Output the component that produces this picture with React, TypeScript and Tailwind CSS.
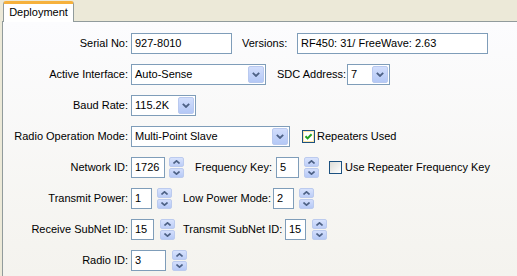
import type { ReactNode } from "react";

const font = { fontFamily: '"Liberation Sans", Arial, sans-serif' };

function Label({ children, className = "" }: { children: ReactNode; className?: string }) {
  return <span className={`whitespace-nowrap text-[11px] text-black ${className}`}>{children}</span>;
}

function TextBox({ value, width }: { value: string; width: string }) {
  return (
    <div
      className={`flex h-[21px] items-center border border-[#7f9db9] bg-white pl-[3px] text-[11px] text-black ${width}`}
    >
      {value}
    </div>
  );
}

function Chevron({ up = false }: { up?: boolean }) {
  return (
    <svg width="7" height="4" viewBox="0 0 7 4" className={up ? "rotate-180" : ""}>
      <path d="M0.5 0.5 L3.5 3.2 L6.5 0.5" fill="none" stroke="#4d6185" strokeWidth="1.6" />
    </svg>
  );
}

function Select({ value, width }: { value: string; width: string }) {
  return (
    <div className={`flex h-[21px] items-center border border-[#7f9db9] bg-white text-[11px] text-black ${width}`}>
      <span className="flex-1 pl-[3px]">{value}</span>
      <div className="m-px flex h-[17px] w-[16px] items-center justify-center rounded-[2px] border border-[#b9c9ef] bg-gradient-to-b from-[#d2defc] to-[#b4c8f6]">
        <svg width="8" height="5" viewBox="0 0 8 5">
          <path d="M0.8 0.8 L4 4 L7.2 0.8" fill="none" stroke="#4d6185" strokeWidth="1.8" />
        </svg>
      </div>
    </div>
  );
}

function Spinner({ className = "" }: { className?: string }) {
  return (
    <div className={`flex h-[21px] w-[15px] flex-col gap-px ${className}`}>
      <div className="flex flex-1 items-center justify-center rounded-[2px] border border-[#bccbee] bg-gradient-to-b from-[#d8e3fd] to-[#bccdf7]">
        <Chevron up />
      </div>
      <div className="flex flex-1 items-center justify-center rounded-[2px] border border-[#bccbee] bg-gradient-to-b from-[#d3defc] to-[#b6c9f6]">
        <Chevron />
      </div>
    </div>
  );
}

function CheckBox({ checked, className = "" }: { checked?: boolean; className?: string }) {
  return (
    <div
      className={`flex h-[13px] w-[13px] items-center justify-center border border-[#1c5180] ${
        checked
          ? "bg-gradient-to-br from-[#fff6dc] to-[#f6c65a] shadow-[inset_0_0_0_1px_#fbe3a4]"
          : "bg-gradient-to-br from-[#dcdcd7] to-white"
      } ${className}`}
    >
      {checked && (
        <div className="flex h-[9px] w-[9px] items-center justify-center bg-white">
          <svg width="9" height="9" viewBox="0 0 9 9">
            <path d="M1.5 4.2 L3.6 6.4 L7.6 2.2" fill="none" stroke="#21a121" strokeWidth="2" />
          </svg>
        </div>
      )}
    </div>
  );
}

function Row({ label, children }: { label: string; children: ReactNode }) {
  return (
    <div className="flex h-[21px] items-center">
      <Label className="w-[125px] text-right">{label}</Label>
      <div className="ml-[3px] flex items-center">{children}</div>
    </div>
  );
}

export default function App() {
  return (
    <div className="flex h-[276px] w-[517px] flex-col overflow-hidden bg-[#ece9d8]" style={font}>
      <div className="flex pl-[3px] pt-px">
        <div className="relative z-10 -mb-px flex h-[21px] w-[71px] items-center justify-center rounded-t-[3px] border-x border-t-[3px] border-x-[#919b9c] border-t-[#f6b13c] bg-white pb-[2px] text-[11px] text-black">
          Deployment
        </div>
      </div>
      <div className="ml-[2px] flex flex-1 flex-col gap-[10px] border-l border-t border-[#919b9c] bg-gradient-to-b from-[#fcfcfe] to-[#f4f3ee] pt-[11px]">
        <Row label="Serial No:">
          <TextBox value="927-8010" width="w-[101px]" />
          <Label className="ml-[10px] w-[55px]">Versions:</Label>
          <TextBox value="RF450: 31/ FreeWave: 2.63" width="w-[191px]" />
        </Row>
        <Row label="Active Interface:">
          <Select value="Auto-Sense" width="w-[135px]" />
          <Label className="ml-[11px] w-[70px]">SDC Address:</Label>
          <Select value="7" width="w-[43px]" />
        </Row>
        <Row label="Baud Rate:">
          <Select value="115.2K" width="w-[65px]" />
        </Row>
        <Row label="Radio Operation Mode:">
          <Select value="Multi-Point Slave" width="w-[159px]" />
          <CheckBox checked className="ml-[12px]" />
          <Label className="ml-[2px]">Repeaters Used</Label>
        </Row>
        <Row label="Network ID:">
          <TextBox value="1726" width="w-[34px]" />
          <Spinner className="ml-[4px]" />
          <Label className="ml-[11px] w-[81px]">Frequency Key:</Label>
          <TextBox value="5" width="w-[23px]" />
          <Spinner className="ml-[5px]" />
          <CheckBox className="ml-[10px]" />
          <Label className="ml-[3px]">Use Repeater Frequency Key</Label>
        </Row>
        <Row label="Transmit Power:">
          <TextBox value="1" width="w-[21px]" />
          <Spinner className="ml-[5px]" />
          <Label className="ml-[11px] w-[90px]">Low Power Mode:</Label>
          <TextBox value="2" width="w-[21px]" />
          <Spinner className="ml-[5px]" />
        </Row>
        <Row label="Receive SubNet ID:">
          <TextBox value="15" width="w-[23px]" />
          <Spinner className="ml-[6px]" />
          <Label className="ml-[8px] w-[102px]">Transmit SubNet ID:</Label>
          <TextBox value="15" width="w-[21px]" />
          <Spinner className="ml-[6px]" />
        </Row>
        <Row label="Radio ID:">
          <TextBox value="3" width="w-[35px]" />
          <Spinner className="ml-[6px]" />
        </Row>
      </div>
    </div>
  );
}
